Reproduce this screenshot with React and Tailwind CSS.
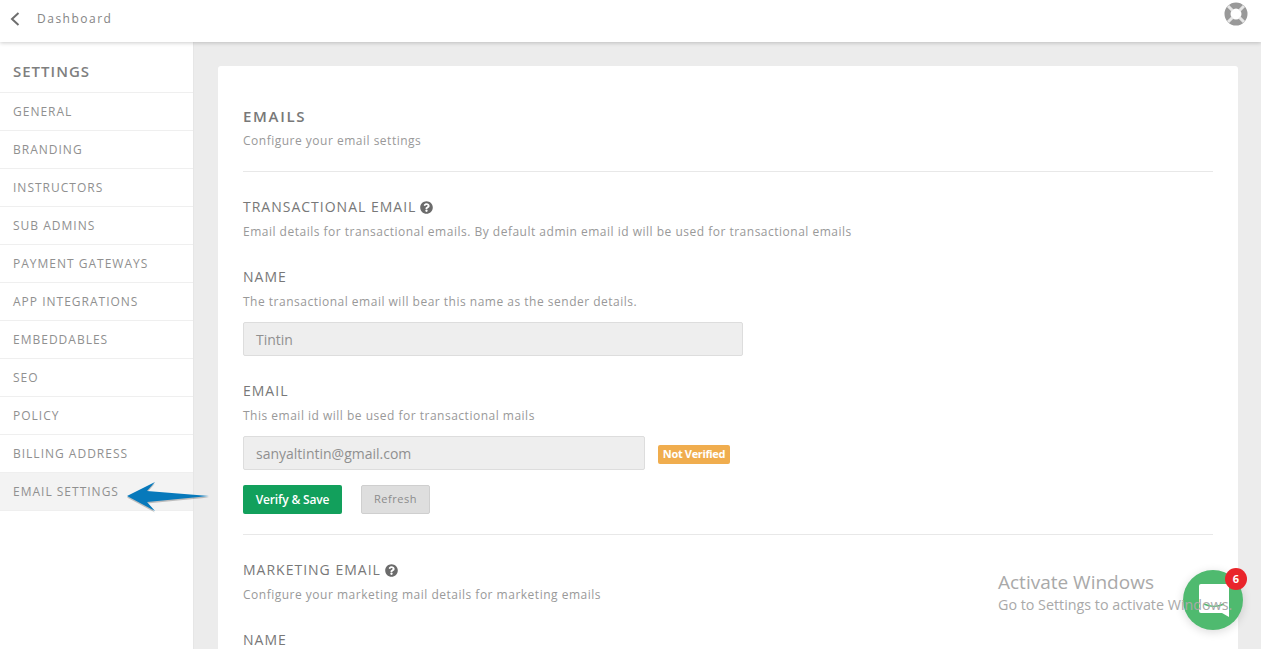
import { FaQuestionCircle } from "react-icons/fa";

const navItems = [
  "GENERAL",
  "BRANDING",
  "INSTRUCTORS",
  "SUB ADMINS",
  "PAYMENT GATEWAYS",
  "APP INTEGRATIONS",
  "EMBEDDABLES",
  "SEO",
  "POLICY",
  "BILLING ADDRESS",
  "EMAIL SETTINGS",
];

function Lifebuoy() {
  return (
    <svg width="24" height="24" viewBox="0 0 24 24">
      <circle cx="12" cy="12" r="8.5" fill="none" stroke="#999" strokeWidth="6" />
      <path d="M4 4l4.5 4.5M20 4l-4.5 4.5M4 20l4.5-4.5M20 20l-4.5-4.5" stroke="#e6e6e6" strokeWidth="3" />
    </svg>
  );
}

function Arrow() {
  return (
    <svg width="84" height="36" viewBox="0 0 84 36" className="absolute left-[126px] top-[479px]">
      <path d="M1 17L29 3l-8 9 62 5-62 6 8 9z" fill="#000" opacity="0.22" transform="translate(0 1.5)" />
      <path d="M1 17L29 3l-8 9 62 5-62 6 8 9z" fill="#0779bb" />
    </svg>
  );
}

function Sidebar() {
  return (
    <aside className="w-[194px] shrink-0 bg-white border-r border-[#e6e6e6]">
      <div className="h-[50px] flex items-center pl-[13px] pt-[9px] text-[15px] font-semibold tracking-[1px] text-[#7f7f7f]">
        SETTINGS
      </div>
      {navItems.map((item) => (
        <div
          key={item}
          className={
            "flex items-center pl-[13px] text-[12px] tracking-[1px] text-[#909090] border-t border-[#efefef] " +
            (item === "EMAIL SETTINGS" ? "h-[39px] bg-[#f3f3f3] border-b" : "h-[38px]")
          }
        >
          {item}
        </div>
      ))}
    </aside>
  );
}

function Field({ title, help, value, width }) {
  return (
    <div>
      <div className="text-[14px] leading-[18px] tracking-[1px] text-[#787878]">{title}</div>
      <div className="mt-[8px] text-[12px] leading-[16px] tracking-[0.5px] text-[#999999]">{help}</div>
      <div className="mt-[12px] flex items-center">
        <div
          className={
            "h-[34px] flex items-center pl-[12px] bg-[#eeeeee] border border-[#dddddd] rounded-[2px] text-[14px] text-[#909090] " +
            width
          }
        >
          {value}
        </div>
        {title === "EMAIL" && (
          <span className="ml-[13px] mt-[2px] h-[19px] w-[72px] flex items-center justify-center bg-[#f0ad4e] rounded-[2px] text-[11px] font-bold tracking-[-0.35px] text-white">
            Not Verified
          </span>
        )}
      </div>
    </div>
  );
}

function SectionHeading({ title, help }) {
  return (
    <div>
      <div className="flex items-center gap-[4px] text-[14px] leading-[18px] tracking-[1px] text-[#787878]">
        {title}
        <FaQuestionCircle className="text-[13px] text-[#6b6b6b]" />
      </div>
      <div className="mt-[8px] text-[12px] leading-[16px] tracking-[0.5px] text-[#999999]">{help}</div>
    </div>
  );
}

function App() {
  return (
    <div className="relative h-screen overflow-hidden flex flex-col bg-[#ececec] font-['Open_Sans',sans-serif]">
      {/* Top bar */}
      <header className="relative z-10 h-[42px] shrink-0 flex items-center justify-between bg-white shadow-[0_1px_4px_rgba(0,0,0,0.2)]">
        <div className="flex items-center mb-[5px]">
          <svg width="10" height="14" viewBox="0 0 10 14" className="ml-[10px]">
            <path d="M8.500 1L2 7l6.500 6" fill="none" stroke="#6e6e6e" strokeWidth="2" />
          </svg>
          <span className="ml-[17px] text-[12px] tracking-[1.5px] text-[#858585]">Dashboard</span>
        </div>
        <div className="mr-[13px] mb-[14px]">
          <Lifebuoy />
        </div>
      </header>

      <div className="flex-1 flex min-h-0">
        <Sidebar />
        <main className="flex-1 pl-[24px] pr-[23px] pt-[24px] overflow-hidden">
          <div className="bg-white rounded-[3px] px-[25px] pt-[40px] pb-[40px]">
            <div className="text-[15px] leading-[20px] font-semibold tracking-[1.7px] text-[#787878]">EMAILS</div>
            <div className="mt-[7px] text-[12px] leading-[16px] tracking-[0.5px] text-[#999999]">
              Configure your email settings
            </div>
            <div className="mt-[22px] h-px bg-[#e8e8e8]" />

            <div className="mt-[26px]">
              <SectionHeading
                title="TRANSACTIONAL EMAIL"
                help="Email details for transactional emails. By default admin email id will be used for transactional emails"
              />
            </div>
            <div className="mt-[28px]">
              <Field
                title="NAME"
                help="The transactional email will bear this name as the sender details."
                value="Tintin"
                width="w-[500px]"
              />
            </div>
            <div className="mt-[26px]">
              <Field
                title="EMAIL"
                help="This email id will be used for transactional mails"
                value="sanyaltintin@gmail.com"
                width="w-[402px]"
              />
            </div>
            <div className="mt-[15px] flex">
              <button className="h-[29px] w-[99px] bg-[#12a05c] rounded-[2px] text-[12px] font-semibold tracking-[-0.15px] text-white">
                Verify &amp; Save
              </button>
              <button className="ml-[19px] h-[29px] w-[69px] bg-[#dedede] border border-[#cfcfcf] rounded-[2px] text-[11px] tracking-[0.5px] text-[#8c8c8c]">
                Refresh
              </button>
            </div>
            <div className="mt-[20px] h-px bg-[#e8e8e8]" />

            <div className="mt-[26px]">
              <SectionHeading
                title="MARKETING EMAIL"
                help="Configure your marketing mail details for marketing emails"
              />
            </div>
            <div className="mt-[28px] text-[14px] leading-[18px] tracking-[1px] text-[#787878]">NAME</div>
          </div>
        </main>
      </div>

      <Arrow />

      {/* Windows watermark */}
      <div className="absolute left-[998px] top-[570px] text-[#a9a9a9] pointer-events-none z-20">
        <div className="text-[19px] leading-[24px]">Activate Windows</div>
        <div className="text-[14.3px] leading-[22px] whitespace-nowrap">Go to Settings to activate Windows.</div>
      </div>

      {/* Chat launcher */}
      <div className="absolute left-[1183px] top-[570px] w-[60px] h-[60px] flex items-center justify-center rounded-full bg-[#4fba6f] shadow-[0_2px_10px_rgba(0,0,0,0.15)] z-10">
        <svg width="30" height="33" viewBox="0 0 30 33" className="ml-[1px] mt-[1px]">
          <path d="M2 0h26a2 2 0 0 1 2 2v31l-7-4H2a2 2 0 0 1-2-2V2a2 2 0 0 1 2-2z" fill="#ffffff" />
          <path d="M5 20c6 3 14 3 20 0" fill="none" stroke="#4fba6f" strokeWidth="1.500" />
        </svg>
      </div>
      <div className="absolute left-[1225px] top-[568px] w-[22px] h-[22px] flex items-center justify-center rounded-full bg-[#e9252b] text-[11px] font-bold text-white z-30">
        6
      </div>
    </div>
  );
}

export default App;
